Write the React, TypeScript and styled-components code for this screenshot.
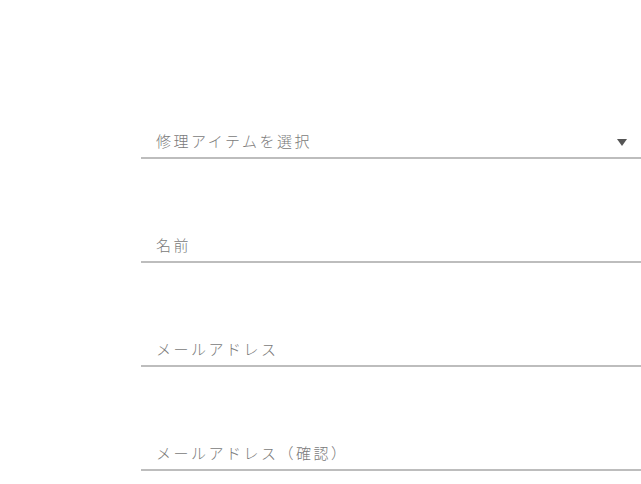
import styled, { createGlobalStyle } from 'styled-components';

const GlobalStyle = createGlobalStyle`
  html, body {
    margin: 0;
    padding: 0;
    background: #ffffff;
  }

  body {
    font-family: 'Noto Sans CJK JP', 'Noto Sans', sans-serif;
  }
`;

const Form = styled.form`
  display: flex;
  flex-direction: column;

  padding: 55px 0 0 141px;
`;

const Field = styled.div`
  display: flex;
  align-items: flex-end;

  height: 104px;
`;

const FieldBox = styled.div`
  flex: 1;

  display: flex;
  align-items: center;
  justify-content: space-between;

  padding: 10px 14px 6px 15px;
  border-bottom: 2px solid #bdbdbd;
`;

const Label = styled.span`
  font-size: 15px;
  font-weight: 300;
  line-height: 20px;
  letter-spacing: 2.5px;
  color: #7a7a7a;
`;

const Caret = styled.span`
  width: 0;
  height: 0;
  margin-top: 2px;

  border-left: 5px solid transparent;
  border-right: 5px solid transparent;
  border-top: 7px solid #555555;
`;

const fields = [
  { label: '修理アイテムを選択', select: true },
  { label: '名前' },
  { label: 'メールアドレス' },
  { label: 'メールアドレス（確認）' },
];

export default function App() {
  return (
    <>
      <GlobalStyle />

      <Form>
        {fields.map((field) => (
          <Field key={field.label}>
            <FieldBox>
              <Label>{field.label}</Label>
              {field.select && <Caret />}
            </FieldBox>
          </Field>
        ))}
      </Form>
    </>
  );
}
